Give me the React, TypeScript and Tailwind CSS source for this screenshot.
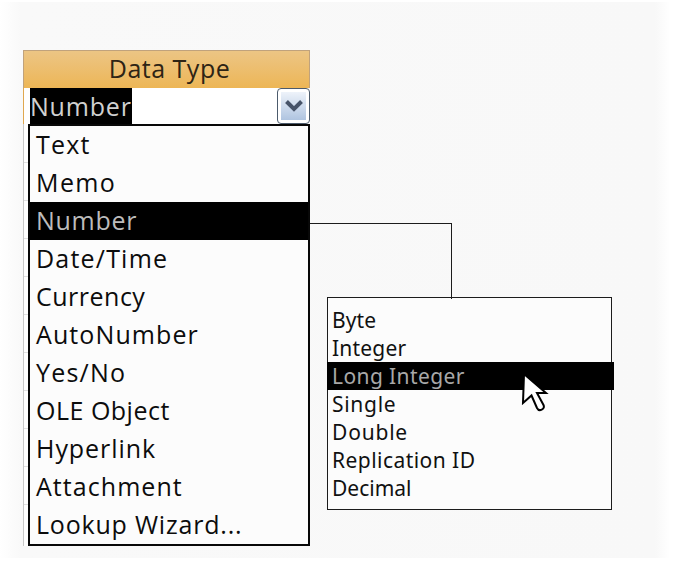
import { clsx } from 'clsx';

interface Option {
  label: string;
  tracking: string;
}

const dataTypes: Option[] = [
  { label: 'Text', tracking: 'tracking-[1.2px]' },
  { label: 'Memo', tracking: 'tracking-[1.4px]' },
  { label: 'Number', tracking: 'tracking-[0.7px]' },
  { label: 'Date/Time', tracking: 'tracking-[1.2px]' },
  { label: 'Currency', tracking: 'tracking-[0.5px]' },
  { label: 'AutoNumber', tracking: 'tracking-[1.1px]' },
  { label: 'Yes/No', tracking: 'tracking-[1.2px]' },
  { label: 'OLE Object', tracking: 'tracking-[0.5px]' },
  { label: 'Hyperlink', tracking: 'tracking-[0.95px]' },
  { label: 'Attachment', tracking: 'tracking-[1.05px]' },
  { label: 'Lookup Wizard...', tracking: 'tracking-[0.8px]' },
];

const fieldSizes: Option[] = [
  { label: 'Byte', tracking: 'tracking-[0.1px]' },
  { label: 'Integer', tracking: 'tracking-[0.2px]' },
  { label: 'Long Integer', tracking: 'tracking-[0.4px]' },
  { label: 'Single', tracking: 'tracking-[0.7px]' },
  { label: 'Double', tracking: 'tracking-[0.8px]' },
  { label: 'Replication ID', tracking: 'tracking-[0.45px]' },
  { label: 'Decimal', tracking: 'tracking-[0px]' },
];

function DropdownButton() {
  return (
    <button className="flex h-9 w-[33px] items-center justify-center rounded-[4px] border border-[#4c5b6c] bg-white p-[3px]">
      <span className="flex h-full w-full items-start justify-center bg-linear-to-b from-[#eef3fa] to-[#afc4e0] pt-[8px]">
        <svg width="18" height="13" viewBox="0 0 18 13" fill="none">
          <path d="M1.5 1.5 L9 9 L16.5 1.5" stroke="#475469" strokeWidth="4" />
        </svg>
      </span>
    </button>
  );
}

function Cursor() {
  return (
    <svg className="absolute left-[192px] top-[74px]" width="30" height="44" viewBox="0 0 30 44">
      <path
        d="M4 2 L3 31 L11.5 23.5 L17 36 C19 40 25.5 37.5 23.5 33 L17 21 H26 Z"
        fill="#fff"
        stroke="#000"
        strokeWidth="2"
      />
    </svg>
  );
}

export default function App() {
  return (
    <div className="h-[564px] w-[678px] overflow-hidden bg-white">
      <div className="flex h-full w-full border-t-2 border-b-[6px] border-white bg-[linear-gradient(to_right,#ffffff_0px,#f9f9f9_20px,#f8f8f8_655px,#ffffff_670px)]">
        {/* Data type column */}
        <section className="ml-[23px] mt-[48px] w-[287px] font-['Open_Sans','Noto_Sans',sans-serif] text-[25px]">
          <div className="flex h-[38px] items-center justify-center border-t border-r border-l border-[#c0a27c] bg-linear-to-b from-[#ecc584] to-[#edb655] pb-px pl-[6px] tracking-[0.5px] text-[#2e2415]">
            Data Type
          </div>
          <div className="flex h-9 justify-between border-l border-[#e0a850] bg-white pl-[6px]">
            <span className="flex w-[102px] items-center overflow-hidden bg-black pt-px tracking-[0.8px] text-[#d0d0d0]">
              Number
            </span>
            <DropdownButton />
          </div>
          <div className="flex">
            <div className="w-[5px] border-l border-[#c8c8c8] bg-white pt-[38px]">
              {dataTypes.slice(1).map((t) => (
                <div key={t.label} className="h-[38px] border-t border-[#e0e0e0]" />
              ))}
            </div>
            <ul className="w-[282px] border-2 border-[#080808] bg-[#fcfcfc]">
              {dataTypes.map((t) => (
                <li
                  key={t.label}
                  className={clsx(
                    'flex h-[38px] items-center pb-px pl-[6px] whitespace-nowrap',
                    t.tracking,
                    t.label === 'Number' ? 'bg-black text-[#bcbcbc]' : 'text-[#0c0c0c]',
                  )}
                >
                  {t.label}
                </li>
              ))}
            </ul>
          </div>
        </section>

        {/* Connector and field size list */}
        <section className="mt-[221px]">
          <div className="relative z-10 -mb-[2px] h-[76px] w-[142px] border-t border-r border-[#1c1c1c]" />
          <ul className="relative ml-[17px] h-[213px] w-[285px] border border-[#1c1c1c] bg-[#fcfcfc] pt-2 font-['Noto_Sans',sans-serif] text-[21px]">
            {fieldSizes.map((f) => (
              <li
                key={f.label}
                className={clsx(
                  'flex h-7 items-center pt-[2px] whitespace-nowrap',
                  f.tracking,
                  f.label === 'Long Integer' ? '-mr-[3px] -ml-px bg-black pl-[5px] text-[#a8a8a8]' : 'pl-1 text-[#111]',
                )}
              >
                {f.label}
              </li>
            ))}
            <Cursor />
          </ul>
        </section>
      </div>
    </div>
  );
}
